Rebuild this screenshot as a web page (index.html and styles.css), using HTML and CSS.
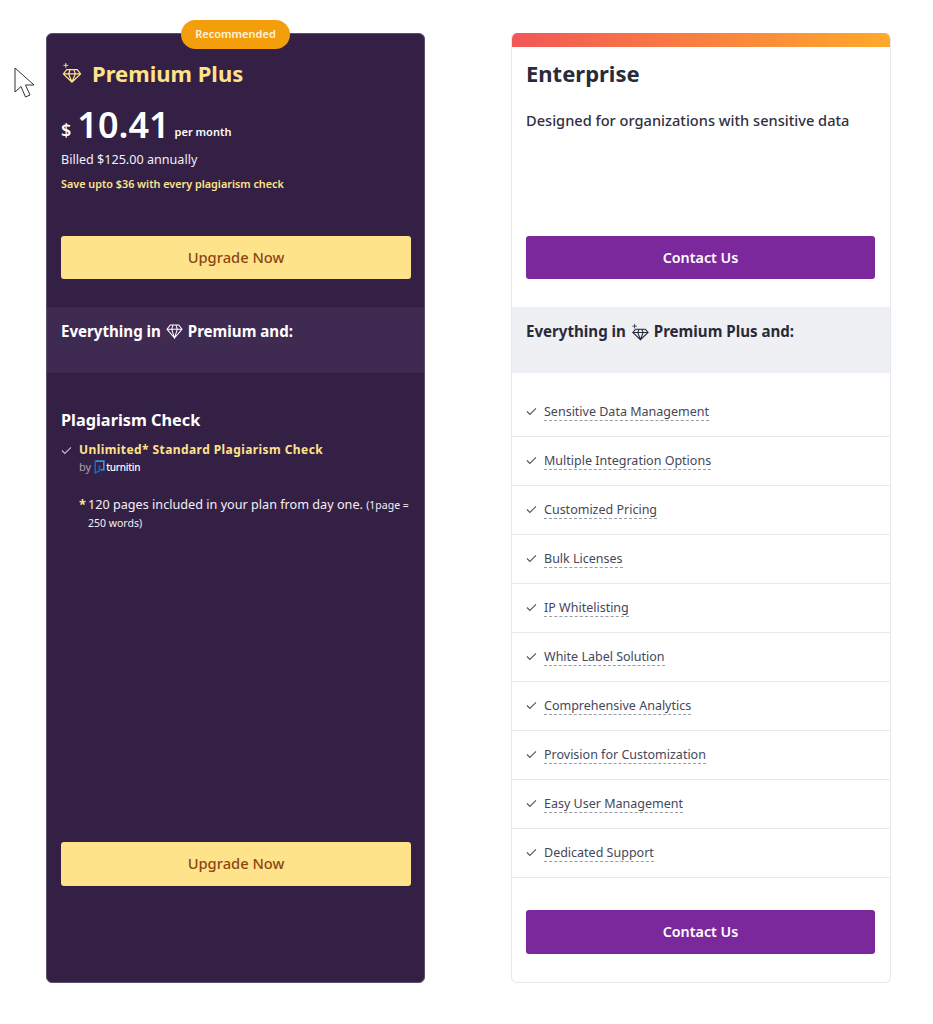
FILE: index.html
```html
<!DOCTYPE html>
<html lang="en">
<head>
<meta charset="utf-8">
<title>Plans</title>
<link rel="stylesheet" href="styles.css">
</head>
<body>
<svg class="cursor" width="22" height="32" viewBox="0 0 22 32"><path d="M1 1V25L7 19.500L11.500 30L16 28L11.500 18H20Z" fill="#fff" stroke="#333" stroke-width="1"/></svg>
<main class="plans">
  <section class="card card-dark">
    <span class="badge">Recommended</span>
    <div class="head head-dark">
      <h2 class="title title-gold">
        <svg class="gem-lg" viewBox="0 0 22 22" fill="none" stroke="#ffe38b" stroke-width="1.300"><path d="M6 8h11l3.500 4.500L11.500 21 2.500 12.500zM2.500 12.500h18M8 12.500 11.500 21 15 12.500M8 12.500 9.500 8M15 12.500 13.500 8"/><path d="M5 1v5M2.500 3.500h5" stroke-width="1"/></svg>
        Premium Plus
      </h2>
      <p class="price"><span class="cur">$</span><span class="amount">10.41</span><span class="per">per month</span></p>
      <p class="billed">Billed $125.00 annually</p>
      <p class="save">Save upto $36 with every plagiarism check</p>
    </div>
    <a class="btn btn-gold">Upgrade Now</a>
    <div class="band band-dark">Everything in
      <svg class="gem" viewBox="0 0 18 16" fill="none" stroke="#fff" stroke-width="1.100"><path d="M4.500 1h9L17 5.500 9 15 1 5.500zM1 5.500h16M6 5.500 9 15l3-9.500M6 5.500 7.500 1M12 5.500 10.500 1"/></svg>
      Premium and:</div>
    <div class="body-dark">
      <h3 class="section">Plagiarism Check</h3>
      <div class="feature">
        <svg class="check" viewBox="0 0 12 10" fill="none" stroke="#c9c3d2" stroke-width="1.200"><path d="M1 5 4.200 8.200 11 1.500"/></svg>
        <div>
          <div class="gold-item">Unlimited* Standard Plagiarism Check</div>
          <div class="by">by
            <svg class="tii" viewBox="0 0 10 13" fill="none" stroke-width="1.500"><path d="M1 1h8v8H6" stroke="#2b9be8"/><path d="M1 1v11l4-2V5" stroke="#1267c4"/></svg><span class="tname">turnitin</span></div>
        </div>
      </div>
      <p class="note"><span class="star">*</span><span>120 pages included in your plan from day one. <small>(1page = 250 words)</small></span></p>
    </div>
    <a class="btn btn-gold btn-tall">Upgrade Now</a>
  </section>

  <section class="card card-light">
    <div class="stripe"></div>
    <div class="head head-light">
      <h2 class="title title-dark">Enterprise</h2>
      <p class="desc">Designed for organizations with sensitive data</p>
    </div>
    <a class="btn btn-purple">Contact Us</a>
    <div class="band band-light">Everything in
      <svg class="gem gem-plus" viewBox="0 0 20 20" fill="none" stroke="#2a2a3a" stroke-width="1.200"><path d="M5 7h11l3 3.500-8.500 8-8.500-8zM2 10.500h17M7.500 10.500l3 8 3-8M7.500 10.500 9 7M13.500 10.500 12 7"/><path d="M4 1v5M1.500 3.500h5" stroke-width=".9"/></svg>
      Premium Plus and:</div>
    <ul class="list">
      <li><svg class="check" viewBox="0 0 12 10" fill="none" stroke="#4b5563" stroke-width="1.200"><path d="M1 5 4.200 8.200 11 1.500"/></svg><span class="dot">Sensitive Data Management</span></li>
      <li><svg class="check" viewBox="0 0 12 10" fill="none" stroke="#4b5563" stroke-width="1.200"><path d="M1 5 4.200 8.200 11 1.500"/></svg><span class="dot">Multiple Integration Options</span></li>
      <li><svg class="check" viewBox="0 0 12 10" fill="none" stroke="#4b5563" stroke-width="1.200"><path d="M1 5 4.200 8.200 11 1.500"/></svg><span class="dot">Customized Pricing</span></li>
      <li><svg class="check" viewBox="0 0 12 10" fill="none" stroke="#4b5563" stroke-width="1.200"><path d="M1 5 4.200 8.200 11 1.500"/></svg><span class="dot">Bulk Licenses</span></li>
      <li><svg class="check" viewBox="0 0 12 10" fill="none" stroke="#4b5563" stroke-width="1.200"><path d="M1 5 4.200 8.200 11 1.500"/></svg><span class="dot">IP Whitelisting</span></li>
      <li><svg class="check" viewBox="0 0 12 10" fill="none" stroke="#4b5563" stroke-width="1.200"><path d="M1 5 4.200 8.200 11 1.500"/></svg><span class="dot">White Label Solution</span></li>
      <li><svg class="check" viewBox="0 0 12 10" fill="none" stroke="#4b5563" stroke-width="1.200"><path d="M1 5 4.200 8.200 11 1.500"/></svg><span class="dot">Comprehensive Analytics</span></li>
      <li><svg class="check" viewBox="0 0 12 10" fill="none" stroke="#4b5563" stroke-width="1.200"><path d="M1 5 4.200 8.200 11 1.500"/></svg><span class="dot">Provision for Customization</span></li>
      <li><svg class="check" viewBox="0 0 12 10" fill="none" stroke="#4b5563" stroke-width="1.200"><path d="M1 5 4.200 8.200 11 1.500"/></svg><span class="dot">Easy User Management</span></li>
      <li><svg class="check" viewBox="0 0 12 10" fill="none" stroke="#4b5563" stroke-width="1.200"><path d="M1 5 4.200 8.200 11 1.500"/></svg><span class="dot">Dedicated Support</span></li>
    </ul>
    <a class="btn btn-purple btn-tall">Contact Us</a>
  </section>
</main>
</body>
</html>
```

FILE: styles.css
```css
* { box-sizing: border-box; }
html, body { margin: 0; padding: 0; }
body { background: #fff; font-family: "Noto Sans", sans-serif; color: #272b3a; height: 1024px; overflow: hidden; }
p, h2, h3, ul { margin: 0; padding: 0; }
.cursor { position: absolute; left: 14px; top: 67px; }
.plans { display: flex; gap: 86px; padding: 33px 42px 0 46px; }
.card { position: relative; width: 380px; height: 950px; border-radius: 6px; display: flex; flex-direction: column; }
.card-dark { width: 379px; background: #342044; border: 1px solid #5f4f6e; color: #fff; }
.card-light { background: #fff; border: 1px solid #e6e8ee; border-top: 0; overflow: hidden; }
.badge { position: absolute; top: -14px; right: 134px; width: 109px; height: 29px; border-radius: 15px; background: #f59e0b; color: #fdf3dd; font-size: 11px; font-weight: 600; display: flex; align-items: center; justify-content: center; padding-bottom: 2px; }
.head { height: 202px; padding: 0 14px; }
.head-dark { padding-top: 24px; }
.head-light { height: 189px; padding-top: 11px; }
.stripe { height: 14px; background: linear-gradient(90deg, #f25757, #ffa92b); }
.title { font-size: 22px; line-height: 30px; font-weight: 700; display: flex; align-items: center; }
.title-gold { color: #ffe38b; gap: 10px; }
.title-dark { color: #272b3a; }
.gem-lg { width: 21px; height: 21px; margin-top: -2px; }
.price { display: flex; align-items: flex-start; margin-top: 15px; height: 44px; }
.cur { font-size: 18px; line-height: 24px; font-weight: 600; margin: 15px 6px 0 0; }
.amount { font-size: 36px; font-weight: 600; line-height: 44px; margin-right: 5px; }
.per { font-size: 11px; line-height: 16px; font-weight: 600; margin-top: 21px; }
.billed { font-size: 12.600px; line-height: 18px; margin-top: 4px; color: #f3eff6; }
.save { font-size: 10.800px; line-height: 16px; font-weight: 600; margin-top: 7px; color: #ffe38b; }
.desc { font-size: 14.600px; font-weight: 500; line-height: 22px; margin-top: 21px; color: #30303f; }
.btn { display: flex; align-items: center; justify-content: center; height: 43px; margin: 0 14px; border-radius: 3px; font-size: 14.700px; font-weight: 500; flex: none; padding-bottom: 1px; }
.btn-tall { height: 44px; padding-bottom: 2px; }
.btn-gold { background: #ffe38b; color: #8c4612; margin-right: 13px; }
.btn-purple { background: #7b289d; color: #fff; margin-right: 15px; font-weight: 600; font-size: 14.300px; }
.band { margin-top: 28px; height: 66px; padding: 13px 14px 0; font-size: 15.100px; line-height: 22px; font-weight: 700; }
.band-dark { background: #3f2a51; color: #fff; }
.band-light { background: #eff0f4; color: #272b3a; }
.gem { width: 17px; height: 15px; vertical-align: -2px; margin: 0 1px; }
.gem-plus { width: 18px; height: 18px; vertical-align: -4px; }
.body-dark { height: 469px; padding: 35px 14px 0; }
.section { font-size: 16.300px; line-height: 24px; font-weight: 700; color: #fff; }
.feature { display: flex; gap: 7px; margin-top: 9px; }
.check { width: 11px; height: 9px; flex: none; margin-top: 5px; }
.gold-item { font-size: 12px; line-height: 18px; font-weight: 700; color: #ffe38b; letter-spacing: .42px; }
.by { font-size: 11px; line-height: 18px; margin-top: -1px; color: #a9a2b3; display: flex; align-items: center; gap: 3px; }
.tii { width: 11px; height: 14px; }
.tname { color: #fff; font-size: 10px; font-weight: 500; letter-spacing: -.25px; margin-left: -2px; }
.note { display: flex; padding-left: 18px; margin-top: 20px; font-size: 12.650px; line-height: 17px; color: #f3eff6; }
.note small { font-size: 10.500px; }
.star { color: #ffe38b; font-weight: 700; width: 9px; flex: none; }
.list { list-style: none; padding-top: 15px; height: 504px; display: flex; flex-direction: column; flex: none; }
.list li { height: 49px; border-bottom: 1px solid #e8eaef; padding: 0 14px; display: flex; align-items: center; gap: 7px; font-size: 12.500px; color: #44475a; flex: none; }
.list li .check { margin-top: 0; margin-bottom: 2px; }
.dot { border-bottom: 1px dashed #9a9ca8; line-height: 17px; }
.list + .btn { margin-top: 33px; }
```
